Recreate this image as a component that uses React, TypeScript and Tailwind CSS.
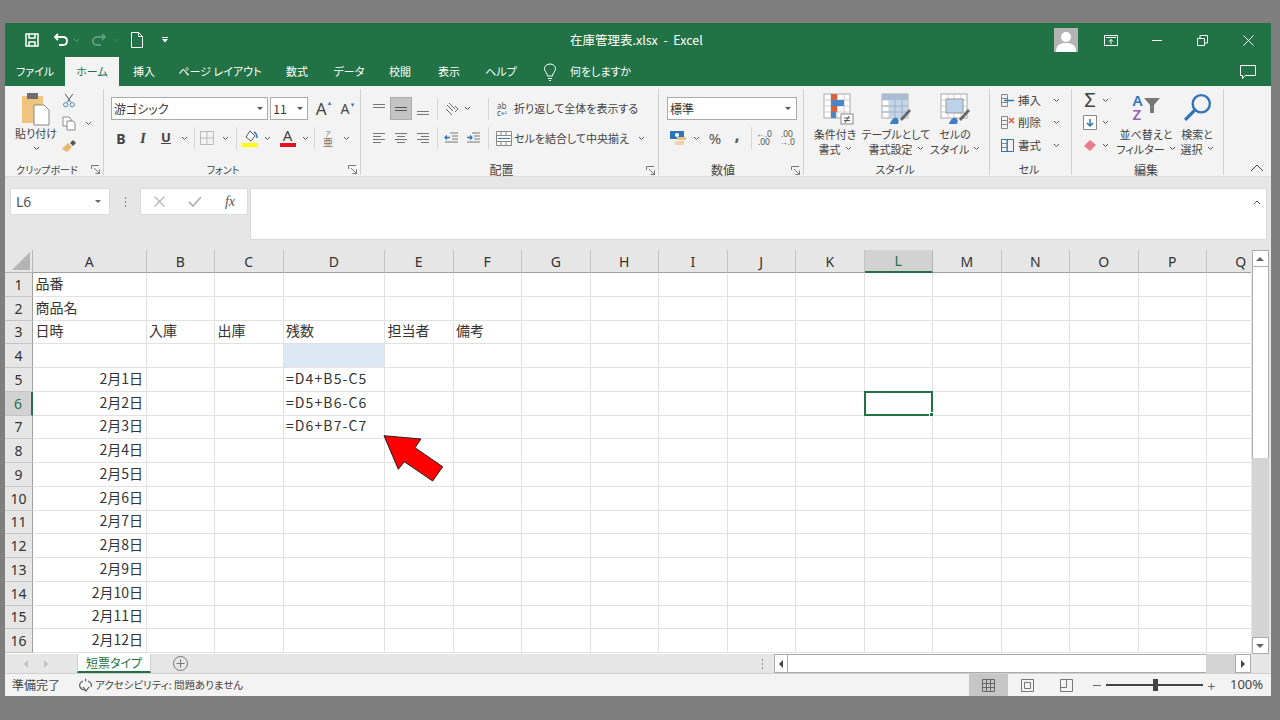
import type { ReactNode } from 'react';

// Excel window: title bar, ribbon, formula bar, sheet grid, status bar

const GREEN = '#217346';

function Chev({ className = '' }: { className?: string }) {
  return (
    <svg viewBox="0 0 7 5" className={`h-[5px] w-[7px] shrink-0 ${className}`} fill="none" stroke="#555" strokeWidth="1">
      <path d="M1 1l2.5 2.5L6 1" />
    </svg>
  );
}

function Launcher() {
  return (
    <svg viewBox="0 0 9 9" className="h-[9px] w-[9px]" fill="none" stroke="#777" strokeWidth="1">
      <path d="M.5 4V.5H8M8.5 8.5L3 3M8.5 4.5v4h-4" />
    </svg>
  );
}

function Sep({ h = 'h-[22px]' }: { h?: string }) {
  return <div className={`w-px ${h} bg-[#d6d6d6]`} />;
}

// one slot of fixed width in a ribbon row, content centred
function Slot({ w, children }: { w: string; children?: ReactNode }) {
  return <div className={`flex shrink-0 items-center justify-center ${w}`}>{children}</div>;
}

function Group({ w, label, labelW, launcher = true, children }: { w: string; label: string; labelW: string; launcher?: boolean; children: ReactNode }) {
  return (
    <div className={`mt-[3px] mb-[1px] flex shrink-0 flex-col border-r border-[#d0d0d0] ${w}`}>
      <div className="h-[75px] shrink-0">{children}</div>
      <div className="flex h-[12px] items-center text-[11px] leading-none text-[#444]">
        <div className={`shrink-0 text-center ${labelW}`}>{label}</div>
        <div className="flex-1" />
        {launcher && <div className="mr-[3px] flex"><Launcher /></div>}
      </div>
    </div>
  );
}

function AlignLines({ rows, active = false }: { rows: number[]; active?: boolean }) {
  return (
    <svg viewBox="0 0 14 14" className="h-[14px] w-[14px]" stroke={active ? '#555' : '#777'} strokeWidth="1">
      {rows.map((r, i) => (
        <path key={i} d={`M1 ${r + 0.5}h12`} />
      ))}
    </svg>
  );
}

function AlignCols({ kind }: { kind: 'l' | 'c' | 'r' }) {
  const rows = [2, 5, 8, 11];
  return (
    <svg viewBox="0 0 14 14" className="h-[14px] w-[14px]" stroke="#777" strokeWidth="1">
      {rows.map((r, i) => {
        const short = i % 2 === 1;
        const x = !short ? 1 : kind === 'l' ? 1 : kind === 'c' ? 3 : 5;
        const len = short ? 8 : 12;
        return <path key={r} d={`M${x} ${r + 0.5}h${len}`} />;
      })}
    </svg>
  );
}

function BigLabel({ w, lines }: { w: string; lines: [string, string] }) {
  return (
    <div className={`mt-[2px] text-center text-[11px] leading-[14.500px] text-[#444] ${w}`}>
      <div>{lines[0]}</div>
      <div className="flex items-center justify-center gap-[4px]">
        {lines[1]}
        <Chev />
      </div>
    </div>
  );
}

function TableIcon({ kind }: { kind: 'cond' | 'table' | 'cell' }) {
  return (
    <svg viewBox="0 0 32 32" className="h-[32px] w-[32px]" fill="none">
      <rect x="2" y="1" width="26" height="24" fill="#fff" stroke="#aaa" />
      <path d="M2 7h26M2 13h26M2 19h26M9 1v24M15 1v24M22 1v24" stroke="#ccc" />
      {kind === 'cond' && (
        <>
          <rect x="9" y="1" width="6" height="6" fill="#d9603b" />
          <rect x="9" y="7" width="13" height="6" fill="#4a86c5" />
          <rect x="9" y="13" width="6" height="6" fill="#d9603b" />
          <rect x="9" y="19" width="5" height="6" fill="#4a86c5" />
          <rect x="19" y="21" width="12" height="10" fill="#fff" stroke="#888" />
          <path d="M22 25h6M22 27.5h6M27 23l-4 7" stroke="#555" />
        </>
      )}
      {kind === 'table' && (
        <>
          <rect x="2" y="1" width="26" height="6" fill="#a9bcd4" />
          <rect x="9" y="7" width="19" height="18" fill="#c5d5e8" />
          <path d="M2 13h26M2 19h26M15 7v18M22 7v18" stroke="#9fb2c8" />
        </>
      )}
      {kind === 'cell' && <rect x="7" y="6" width="17" height="14" fill="#bcd2ea" stroke="#999" />}
      {kind !== 'cond' && (
        <>
          <path d="M20 26l9-10 2 2-9 10z" fill="#666" />
          <path d="M10 31c1-4 4-7 7-6 2 1 2 3 1 6z" fill="#3f7fc1" />
        </>
      )}
    </svg>
  );
}

function Ribbon() {
  return (
    <div className="flex h-[91px] shrink-0 border-b border-[#dcdcdc] bg-[#f3f3f3] [&>div:last-of-type]:border-r-0">
      {/* clipboard */}
      <Group w="w-[99px]" label="クリップボード" labelW="w-[81px] pl-[3px] text-[10px]">
        <div className="flex">
          <div className="ml-[10px] flex w-[42px] flex-col items-center">
            <svg viewBox="0 0 30 34" className="mt-[3px] h-[34px] w-[30px]">
              <rect x="1" y="4" width="21" height="27" fill="#efc47f" />
              <rect x="6" y="1" width="11" height="6" fill="#6e6e6e" />
              <path d="M13 13h10l5 5v15H13z" fill="#fff" stroke="#888" />
            </svg>
            <div className="text-[11px] leading-[15px] text-[#444]">貼り付け</div>
            <Chev className="mt-[5px]" />
          </div>
          <div className="ml-[4px] flex flex-col items-center gap-[8px] pt-[4px]">
            <svg viewBox="0 0 14 16" className="h-[15px] w-[14px]" fill="none" stroke="#555" strokeWidth="1">
              <path d="M3 1l6 9M11 1L5 10" />
              <circle cx="3.5" cy="12.5" r="2.3" stroke="#3f7fc1" />
              <circle cx="10.5" cy="12.5" r="2.3" stroke="#3f7fc1" />
            </svg>
            <div className="flex h-[15px] w-[14px] items-center">
              <svg viewBox="0 0 14 15" className="h-[15px] w-[14px] shrink-0" fill="#fff" stroke="#888" strokeWidth="1">
                <path d="M1 1h6l2 2v7H1z" />
                <path d="M5 5h6l2 2v7H5z" />
              </svg>
              <Chev className="ml-[9px]" />
            </div>
            <svg viewBox="0 0 16 14" className="h-[14px] w-[16px]">
              <path d="M1 10l6-6 4 4-5 5z" fill="#e9b66e" />
              <path d="M9 4l3-3 3 3-3 3z" fill="#555" />
            </svg>
          </div>
        </div>
      </Group>

      {/* font */}
      <Group w="w-[257px]" label="フォント" labelW="w-[238px] text-[10px]">
        <div className="flex h-[36px] items-center pt-[3px]">
          <div className="ml-[7px] flex h-[23px] w-[158px] items-center justify-between border border-[#ababab] bg-white px-[2px] text-[12px] text-[#333]">
            游ゴシック
            <span className="mr-[2px] h-0 w-0 border-x-[3px] border-t-[3px] border-x-transparent border-t-[#555]" />
          </div>
          <div className="ml-[2px] flex h-[23px] w-[38px] items-center justify-between border border-[#ababab] bg-white px-[2px] text-[12px] text-[#333]">
            11
            <span className="mr-[2px] h-0 w-0 border-x-[3px] border-t-[3px] border-x-transparent border-t-[#555]" />
          </div>
          <div className="ml-[4px] flex w-[24px] items-start justify-center font-['Noto_Sans'] text-[17px] leading-none text-[#444]">
            A<span className="text-[6px] text-[#3f7fc1]">▲</span>
          </div>
          <div className="flex w-[24px] items-start justify-center font-['Noto_Sans'] text-[14px] leading-none text-[#444]">
            A<span className="text-[6px] text-[#3f7fc1]">▼</span>
          </div>
        </div>
        <div className="flex h-[26px] items-center font-['Noto_Sans'] text-[#444]">
          <Slot w="w-[24px] ml-[5px]"><span className="text-[14px] font-bold">B</span></Slot>
          <Slot w="w-[20px]"><span className="font-['Liberation_Serif'] text-[15px] font-bold italic">I</span></Slot>
          <Slot w="w-[26px]"><span className="text-[13px] font-bold underline">U</span></Slot>
          <Slot w="w-[10px]"><Chev /></Slot>
          <Slot w="w-[10px]"><Sep /></Slot>
          <Slot w="w-[16px]">
            <svg viewBox="0 0 14 14" className="h-[14px] w-[14px] shrink-0" fill="none" stroke="#bbb"><path d="M.5.5h13v13H.5zM7 .5v13M.5 7h13" /></svg>
          </Slot>
          <Slot w="w-[20px]"><Chev /></Slot>
          <Slot w="w-[2px]"><Sep /></Slot>
          <Slot w="w-[26px]">
            <svg viewBox="0 0 16 17" className="h-[17px] w-[16px]">
              <path d="M8 1l5 5-4 5-5-4z" fill="#fff" stroke="#555" />
              <path d="M12 2c2 1 3 3 3 6" fill="none" stroke="#3f7fc1" strokeWidth="1.5" />
              <rect x="0" y="13" width="16" height="4" fill="#ffff00" />
            </svg>
          </Slot>
          <Slot w="w-[8px]"><Chev /></Slot>
          <Slot w="w-[29px] ml-[2px]">
            <div className="flex w-[16px] flex-col items-center text-[15px] leading-[13px]">
              <span>A</span>
              <span className="mt-[1px] h-[4px] w-[16px] bg-[#e81123]" />
            </div>
          </Slot>
          <Slot w="w-[7px]"><Chev /></Slot>
          <Slot w="w-[10px]"><Sep /></Slot>
          <Slot w="w-[18px]">
            <div className="flex flex-col items-center font-['Noto_Sans_CJK_JP'] text-[#777]">
              <span className="text-[6px] leading-[7px]">ア</span>
              <span className="text-[10px] leading-[10px]">亜</span>
            </div>
          </Slot>
          <Slot w="w-[18px]"><Chev /></Slot>
        </div>
      </Group>

      {/* alignment */}
      <Group w="w-[298px]" label="配置" labelW="w-[281px] text-[12px]">
        <div className="flex h-[36px] items-center pt-[3px]">
          <Slot w="w-[22px] ml-[7px]"><AlignLines rows={[2, 5]} /></Slot>
          <Slot w="w-[22px] h-[23px] bg-[#c4c4c4] border border-[#aaa]"><AlignLines rows={[5, 8]} active /></Slot>
          <Slot w="w-[22px]"><AlignLines rows={[9, 12]} /></Slot>
          <Slot w="w-[6px]"><Sep /></Slot>
          <Slot w="w-[22px] ml-[1px]">
            <svg viewBox="0 0 14 14" className="h-[14px] w-[14px]" fill="none" stroke="#666"><path d="M2 3l6 6M4 1l6 6M1 7l6 6M10 4l3 3-3 3" /></svg>
          </Slot>
          <Slot w="w-[8px]"><Chev /></Slot>
          <Slot w="w-[3px] ml-[16px]"><Sep /></Slot>
          <div className="ml-[7px] flex items-center text-[11px] text-[#444]">
            <span className="mr-[3px] w-[14px] font-['Noto_Sans'] text-[8px] leading-[7px] text-[#555]">ab<br />c<span className="text-[#3f7fc1]">↵</span></span>
            折り返して全体を表示する
          </div>
        </div>
        <div className="flex h-[26px] items-center">
          <Slot w="w-[22px] ml-[7px]"><AlignCols kind="l" /></Slot>
          <Slot w="w-[22px]"><AlignCols kind="c" /></Slot>
          <Slot w="w-[22px]"><AlignCols kind="r" /></Slot>
          <Slot w="w-[6px]"><Sep /></Slot>
          <Slot w="w-[22px]">
            <svg viewBox="0 0 14 14" className="h-[14px] w-[14px]" fill="none" stroke="#777"><path d="M6 2h8M8 5h6M8 8h6M1 11h13" /><path d="M1 6.500h5M3 4.500l-2 2 2 2" stroke="#2f75b5" strokeWidth="1.300" /></svg>
          </Slot>
          <Slot w="w-[22px]">
            <svg viewBox="0 0 14 14" className="h-[14px] w-[14px]" fill="none" stroke="#777"><path d="M6 2h8M8 5h6M8 8h6M1 11h13" /><path d="M1 6.500h5M4 4.500l2 2-2 2" stroke="#2f75b5" strokeWidth="1.300" /></svg>
          </Slot>
          <Slot w="w-[3px] ml-[3px]"><Sep /></Slot>
          <div className="ml-[6px] flex items-center text-[11px] text-[#444]">
            <svg viewBox="0 0 16 15" className="mr-[2px] h-[15px] w-[16px]" fill="#fff" stroke="#888"><path d="M.5.5h15v14H.5zM.5 4.500h15M.5 10.500h15M5 .5v4M10 .5v4M5 10.500v4M10 10.500v4" /><path d="M2 7.500h12" stroke="#2f75b5" /></svg>
            セルを結合して中央揃え
            <Chev className="ml-[9px]" />
          </div>
        </div>
      </Group>

      {/* number */}
      <Group w="w-[145px]" label="数値" labelW="w-[128px] text-[12px]">
        <div className="flex h-[36px] items-center pt-[3px]">
          <div className="ml-[8px] flex h-[23px] w-[130px] items-center justify-between border border-[#ababab] bg-white px-[2px] text-[12px] text-[#333]">
            標準
            <span className="mr-[3px] h-0 w-0 border-x-[3px] border-t-[3px] border-x-transparent border-t-[#555]" />
          </div>
        </div>
        <div className="flex h-[26px] items-center font-['Noto_Sans'] text-[#555]">
          <Slot w="w-[24px] ml-[7px]">
            <svg viewBox="0 0 17 16" className="h-[16px] w-[17px]">
              <rect x="0" y="1" width="14" height="8" fill="#2f75b5" />
              <circle cx="7" cy="5" r="2" fill="#fff" />
              <rect x="7" y="7" width="9" height="3" fill="#e9c27f" />
              <rect x="5" y="11" width="9" height="4" fill="#efd3a6" />
            </svg>
          </Slot>
          <Slot w="w-[12px]"><Chev /></Slot>
          <Slot w="w-[26px]"><span className="text-[15px]">%</span></Slot>
          <Slot w="w-[18px]"><span className="mt-[-8px] text-[18px] font-bold leading-none">,</span></Slot>
          <Slot w="w-[10px]"><Sep /></Slot>
          <Slot w="w-[16px]"><span className="text-center text-[8.500px] leading-[8px]"><span className="text-[#2f75b5]">←</span>.0<br />.00</span></Slot>
          <Slot w="w-[30px]"><span className="text-center text-[8.500px] leading-[8px]">.00<br /><span className="text-[#2f75b5]">→</span>.0</span></Slot>
        </div>
      </Group>

      {/* styles */}
      <Group w="w-[186px]" label="スタイル" labelW="w-[182px]" launcher={false}>
        <div className="ml-[1px] flex pt-[4px]">
          <div className="flex w-[60px] flex-col items-center pl-[5px]">
            <TableIcon kind="cond" />
            <BigLabel w="w-[60px] ml-[-5px]" lines={['条件付き', '書式']} />
          </div>
          <div className="flex w-[60px] flex-col items-center pl-[2px]">
            <TableIcon kind="table" />
            <BigLabel w="w-[76px]" lines={['テーブルとして', '書式設定']} />
          </div>
          <div className="flex w-[60px] flex-col items-center">
            <TableIcon kind="cell" />
            <BigLabel w="w-[60px]" lines={['セルの', 'スタイル']} />
          </div>
        </div>
      </Group>

      {/* cells */}
      <Group w="w-[82px]" label="セル" labelW="w-[78px]" launcher={false}>
        <div className="flex flex-col text-[11.500px] text-[#444]">
          {(['挿入', '削除', '書式'] as const).map((t, i) => (
            <div key={t} className="flex h-[22.500px] items-center pl-[10px]">
              <svg viewBox="0 0 15 15" className="mr-[3px] h-[15px] w-[15px]" fill="none" stroke="#888">
                <path d="M1.500 1.500h6v12h-6zM1.500 5.500h6M1.500 9.500h6" />
                {i === 0 && <path d="M7 7.500h7M4 7.500h4" stroke="#2f75b5" strokeWidth="1.500" />}
                {i === 1 && <path d="M9 3l5 5M14 3L9 8" stroke="#d9603b" strokeWidth="1.500" />}
                {i === 2 && <path d="M1.500 1.500h12v12h-12zM7 1.500v12" stroke="#2f75b5" />}
              </svg>
              <span className="w-[29px]">{t}</span>
              <Chev className="ml-[6px]" />
            </div>
          ))}
        </div>
      </Group>

      {/* editing */}
      <Group w="w-[152px]" label="編集" labelW="w-[148px] text-[12px]" launcher={false}>
        <div className="flex">
          <div className="flex w-[44px] flex-col pl-[11px]">
            <div className="flex h-[22.500px] items-center">
              <span className="w-[14px] text-center font-['Noto_Sans'] text-[20px] leading-none text-[#444]">Σ</span>
              <Chev className="ml-[5px]" />
            </div>
            <div className="flex h-[22.500px] items-center">
              <svg viewBox="0 0 14 15" className="h-[15px] w-[14px]" fill="#fff" stroke="#888"><path d="M.5.5h13v14H.5z" /><path d="M7 4v7M4 8l3 3 3-3" fill="none" stroke="#2f75b5" strokeWidth="1.500" /></svg>
              <Chev className="ml-[5px]" />
            </div>
            <div className="flex h-[22.500px] items-center">
              <svg viewBox="0 0 14 13" className="h-[13px] w-[14px]"><path d="M1 7l6-6 6 5-6 6z" fill="#e87d8f" /></svg>
              <Chev className="ml-[5px]" />
            </div>
          </div>
          <div className="flex w-[60px] flex-col items-center pt-[4px]">
            <div className="flex h-[32px] items-start font-['Noto_Sans']">
              <div className="flex flex-col text-[15px] font-semibold leading-[14px]">
                <span className="text-[#2f75b5]">A</span>
                <span className="text-[#9a5fb4]">Z</span>
              </div>
              <svg viewBox="0 0 16 15" className="ml-[1px] mt-[5px] h-[15px] w-[16px]"><path d="M0 0h16L10 7v8H6V7z" fill="#777" /></svg>
            </div>
            <BigLabel w="w-[64px]" lines={['並べ替えと', 'フィルター']} />
          </div>
          <div className="ml-[-1px] flex w-[44px] flex-col items-center pt-[4px]">
            <svg viewBox="0 0 27 27" className="mb-[3px] h-[29px] w-[29px]" fill="none">
              <circle cx="17" cy="10" r="8" stroke="#2f75b5" strokeWidth="2.200" />
              <path d="M11 16l-9 9" stroke="#2f75b5" strokeWidth="3" />
            </svg>
            <BigLabel w="w-[44px]" lines={['検索と', '選択']} />
          </div>
        </div>
      </Group>

      <div className="flex flex-1 flex-col justify-end pb-[4px] pl-[26px]">
        <svg viewBox="0 0 14 8" className="h-[8px] w-[14px]" fill="none" stroke="#444"><path d="M1 7l6-6 6 6" /></svg>
      </div>
    </div>
  );
}

function TitleBar() {
  return (
    <div className="flex h-[34px] shrink-0 items-center text-white" style={{ backgroundColor: GREEN }}>
      <Slot w="w-[18px] ml-[18px]">
        <svg viewBox="0 0 14 14" className="h-[14px] w-[14px]" fill="none" stroke="#fff" strokeWidth="1.500"><path d="M1 1h12v12H1z" /><path d="M4 1v4h6V1M4 13V9h6v4" /></svg>
      </Slot>
      <Slot w="w-[20px] ml-[10px]">
        <svg viewBox="0 0 16 14" className="h-[14px] w-[16px]" fill="none" stroke="#fff" strokeWidth="1.800"><path d="M5 1L2 4l3 3M2 4h8c3 0 4 2 4 4s-1 4-4 4H6" /></svg>
      </Slot>
      <Slot w="w-[7px] ml-[2px]"><Chev className="opacity-70 invert" /></Slot>
      <Slot w="w-[20px] ml-[9px]">
        <svg viewBox="0 0 16 14" className="h-[14px] w-[16px]" fill="none" stroke="#5f9c7b" strokeWidth="1.800"><path d="M11 1l3 3-3 3M14 4H6C3 4 2 6 2 8s1 4 4 4h4" /></svg>
      </Slot>
      <Slot w="w-[7px] ml-[3px]"><Chev className="opacity-30 invert" /></Slot>
      <Slot w="w-[14px] ml-[11px]">
        <svg viewBox="0 0 12 16" className="h-[16px] w-[12px]" fill="none" stroke="#fff"><path d="M.5.5h7l4 4v11H.5zM7.500.5v4h4" /></svg>
      </Slot>
      <Slot w="w-[6px] ml-[18px]">
        <svg viewBox="0 0 6 6" className="h-[6px] w-[6px]" fill="#fff"><path d="M0 0h6v1H0zM0 2h6L3 5.500z" /></svg>
      </Slot>
      <div className="ml-[402px] w-[300px] whitespace-pre text-[12.500px]">在庫管理表.xlsx  -  Excel</div>
      <div className="flex-1" />
      <div className="mr-[21px] flex h-[24px] w-[24px] items-end justify-center overflow-hidden bg-[#b4b4b4]">
        <svg viewBox="0 0 24 24" className="h-[24px] w-[24px]" fill="#fff"><circle cx="12" cy="9" r="5" /><path d="M2 24c0-7 4-9 10-9s10 2 10 9z" /></svg>
      </div>
      <Slot w="w-[24px] mr-[22px]">
        <svg viewBox="0 0 14 11" className="h-[11px] w-[14px]" fill="none" stroke="#fff"><path d="M.5.5h13v10H.5zM2 2.500h10M7 9V4.500M5 6.500l2-2 2 2" /></svg>
      </Slot>
      <Slot w="w-[24px] mr-[21px]">
        <span className="h-px w-[10px] bg-white" />
      </Slot>
      <Slot w="w-[24px] mr-[22px]">
        <svg viewBox="0 0 11 11" className="h-[11px] w-[11px]" fill="none" stroke="#fff"><path d="M.5 3.500h7v7h-7zM3 3V.5h7.500V8H8" /></svg>
      </Slot>
      <Slot w="w-[24px] mr-[11px]">
        <svg viewBox="0 0 11 11" className="h-[11px] w-[11px]" fill="none" stroke="#fff"><path d="M.5.5l10 10M10.500.5l-10 10" /></svg>
      </Slot>
    </div>
  );
}

function TabRow() {
  const tabs: [string, string][] = [
    ['挿入', 'w-[50px]'],
    ['ページ レイアウト', 'w-[102px]'],
    ['数式', 'w-[52px]'],
    ['データ', 'w-[52px]'],
    ['校閲', 'w-[50px]'],
    ['表示', 'w-[48px]'],
    ['ヘルプ', 'w-[56px]'],
  ];
  return (
    <div className="flex h-[29px] shrink-0 items-stretch text-[11px] text-white" style={{ backgroundColor: GREEN }}>
      <div className="flex w-[60px] items-center justify-center">ファイル</div>
      <div className="flex w-[54px] items-center justify-center bg-[#f3f3f3] text-[#217346]">ホーム</div>
      {tabs.map(([t, w]) => (
        <div key={t} className={`flex items-center justify-center ${w}`}>{t}</div>
      ))}
      <div className="ml-[14px] flex items-center">
        <svg viewBox="0 0 14 18" className="mr-[13px] h-[18px] w-[14px]" fill="none" stroke="#fff"><path d="M4.500 13c0-3-3-4-3-7.500C1.500 3 4 1 7 1s5.500 2 5.500 4.500C12.500 9 9.500 10 9.500 13zM5 15.500h4M6 17.500h2" /></svg>
        何をしますか
      </div>
      <div className="flex-1" />
      <div className="mr-[15px] flex items-center">
        <svg viewBox="0 0 16 14" className="h-[14px] w-[16px]" fill="none" stroke="#fff"><path d="M.5.5h15v10H5l-2.500 3v-3h-2z" /></svg>
      </div>
    </div>
  );
}

function FormulaBar() {
  return (
    <div className="flex h-[73px] shrink-0 bg-[#e6e6e6] pt-[11px] font-['Noto_Sans']">
      <div className="ml-[5px] flex h-[27px] w-[100px] items-center justify-between border border-[#dadada] bg-white px-[5px] text-[14px] text-[#555]">
        L6
        <span className="mr-[3px] h-0 w-0 border-x-[3px] border-t-[3px] border-x-transparent border-t-[#666]" />
      </div>
      <div className="flex h-[27px] w-[30px] flex-col items-center justify-center gap-[2px]">
        <span className="h-[2px] w-px bg-[#888]" />
        <span className="h-[2px] w-px bg-[#888]" />
        <span className="h-[2px] w-px bg-[#888]" />
      </div>
      <div className="flex h-[27px] w-[108px] items-center border border-[#dadada] bg-white">
        <Slot w="w-[36px]">
          <svg viewBox="0 0 11 11" className="h-[11px] w-[11px]" fill="none" stroke="#b5b5b5" strokeWidth="1.300"><path d="M.5.5l10 10M10.500.5l-10 10" /></svg>
        </Slot>
        <Slot w="w-[36px]">
          <svg viewBox="0 0 14 11" className="h-[11px] w-[14px]" fill="none" stroke="#b5b5b5" strokeWidth="1.800"><path d="M1 6l4 4 8-9" /></svg>
        </Slot>
        <Slot w="w-[34px]"><span className="font-['Liberation_Serif'] text-[14px] italic text-[#555]">fx</span></Slot>
      </div>
      <div className="ml-[2px] flex h-[52px] flex-1 items-start justify-end border border-[#dadada] bg-white pr-[5px] pt-[11px]">
        <svg viewBox="0 0 8 5" className="h-[5px] w-[8px]" fill="none" stroke="#555"><path d="M1 4l3-3 3 3" /></svg>
      </div>
      <div className="w-[4px]" />
    </div>
  );
}

const COLS = ['A', 'B', 'C', 'D', 'E', 'F', 'G', 'H', 'I', 'J', 'K', 'L', 'M', 'N', 'O', 'P', 'Q'];

// row number -> text per column
const CELLS: Record<number, Record<string, string>> = {
  1: { A: '品番' },
  2: { A: '商品名' },
  3: { A: '日時', B: '入庫', C: '出庫', D: '残数', E: '担当者', F: '備考' },
  5: { A: '2月1日', D: '=D4+B5-C5' },
  6: { A: '2月2日', D: '=D5+B6-C6' },
  7: { A: '2月3日', D: '=D6+B7-C7' },
  8: { A: '2月4日' },
  9: { A: '2月5日' },
  10: { A: '2月6日' },
  11: { A: '2月7日' },
  12: { A: '2月8日' },
  13: { A: '2月9日' },
  14: { A: '2月10日' },
  15: { A: '2月11日' },
  16: { A: '2月12日' },
};

function Sheet() {
  const rows = Array.from({ length: 16 }, (_, i) => i + 1);
  return (
    <div className="relative flex h-[404px] shrink-0 bg-white">
      <div className="grid w-[1246px] shrink-0 grid-cols-[28px_113.5px_68.5px_68.5px_101.5px_repeat(13,68.5px)] grid-rows-[23px_repeat(16,23.75px)] overflow-hidden text-[14px] text-[#333]">
        <div className="flex items-end justify-end border-r border-b border-[#b5b5b5] bg-[#e6e6e6] p-[2px]">
          <span className="h-0 w-0 border-b-[18px] border-l-[18px] border-b-[#b4b4b4] border-l-transparent" />
        </div>
        {COLS.map((c) => (
          <div
            key={c}
            className={`flex items-center justify-center border-r border-b font-['Noto_Sans'] text-[14px] ${
              c === 'L'
                ? 'border-r-[#b5b5b5] border-b-2 border-b-[#217346] bg-[#d2d2d2] text-[#217346]'
                : 'border-r-[#c4c4c4] border-b-[#9f9f9f] bg-[#e6e6e6] text-[#333]'
            }`}
          >
            {c}
          </div>
        ))}
        {rows.map((r) => (
          <RowCells key={r} r={r} />
        ))}
      </div>
      {/* red call-out arrow */}
      <svg viewBox="0 0 70 60" className="absolute left-[375px] top-[180px] h-[60px] w-[70px]">
        <path d="M4 5.700L41 9l-6 8.700L62.700 36.700 52.700 51 24.300 31.700l-6 7.600z" fill="#ff0000" stroke="#222" strokeWidth="1" />
      </svg>
      <ScrollV />
    </div>
  );
}

function RowCells({ r }: { r: number }) {
  const sel = r === 6;
  return (
    <>
      <div
        className={`flex items-center justify-center border-b font-['Noto_Sans'] text-[14px] ${
          sel
            ? 'border-r-2 border-r-[#217346] border-b-[#c4c4c4] bg-[#d2d2d2] text-[#217346]'
            : 'border-r border-r-[#9f9f9f] border-b-[#c4c4c4] bg-[#e6e6e6] text-[#333]'
        }`}
      >
        {r}
      </div>
      {COLS.map((c) => {
        const text = CELLS[r]?.[c];
        const isDate = c === 'A' && r >= 5;
        const fill = c === 'D' && r === 4;
        const formula = c === 'D' && r >= 5;
        return (
          <div
            key={c}
            className={`relative flex items-center overflow-visible whitespace-nowrap border-r border-b border-[#e1e1e1] px-[2.500px] pb-[2px] ${isDate ? 'justify-end' : ''} ${fill ? 'bg-[#dce9f5]' : ''} ${formula ? 'tracking-[1.100px]' : ''}`}
          >
            {text}
            {c === 'L' && r === 6 && (
              <span className="absolute inset-[-1px] z-10 border-2 border-[#217346]">
                <span className="absolute bottom-[-3px] right-[-3px] h-[5px] w-[5px] border border-white bg-[#217346]" />
              </span>
            )}
          </div>
        );
      })}
    </>
  );
}

function ScrollV() {
  return (
    <div className="flex flex-1 flex-col items-center bg-[#e6e6e6] pr-[2px]">
      <div className="flex h-[17px] w-[17px] shrink-0 items-center justify-center border border-[#ababab] bg-white">
        <span className="h-0 w-0 border-x-[4px] border-b-[4px] border-x-transparent border-b-[#666]" />
      </div>
      <div className="h-[191px] w-[17px] shrink-0 border-x border-[#ababab] bg-white" />
      <div className="w-[17px] flex-1 bg-[#d4d4d4]" />
      <div className="flex h-[17px] w-[17px] shrink-0 items-center justify-center border border-[#ababab] bg-white">
        <span className="h-0 w-0 border-x-[4px] border-t-[4px] border-x-transparent border-t-[#666]" />
      </div>
    </div>
  );
}

function SheetTabs() {
  return (
    <div className="flex h-[20px] shrink-0 items-stretch border-b border-[#d0d0d0] bg-[#e6e6e6]">
      <div className="flex w-[72px] items-center pl-[19px] text-[#bbb]">
        <span className="h-0 w-0 border-y-[4px] border-r-[4px] border-y-transparent border-r-[#c2c2c2]" />
        <span className="ml-[16px] h-0 w-0 border-y-[4px] border-l-[4px] border-y-transparent border-l-[#c2c2c2]" />
      </div>
      <div className="flex w-[74px] items-center justify-center border-x border-b-2 border-x-[#cfcfcf] border-b-[#217346] bg-white text-[12px] text-[#217346]">
        短票タイプ
      </div>
      <div className="ml-[22px] flex items-center">
        <svg viewBox="0 0 15 15" className="h-[15px] w-[15px]" fill="none" stroke="#777"><circle cx="7.500" cy="7.500" r="7" /><path d="M7.500 3.500v8M3.500 7.500h8" /></svg>
      </div>
      <div className="flex-1" />
      <div className="mr-[11px] flex flex-col items-center justify-center gap-[2px]">
        <span className="h-[2px] w-px bg-[#888]" />
        <span className="h-[2px] w-px bg-[#888]" />
        <span className="h-[2px] w-px bg-[#888]" />
      </div>
      <div className="flex w-[14px] items-center justify-center border border-[#ababab] bg-white">
        <span className="h-0 w-0 border-y-[4px] border-r-[4px] border-y-transparent border-r-[#444]" />
      </div>
      <div className="w-[418px] border-y border-[#ababab] bg-white" />
      <div className="w-[29px] bg-[#d4d4d4]" />
      <div className="flex w-[16px] items-center justify-center border border-[#ababab] bg-white">
        <span className="h-0 w-0 border-y-[4px] border-l-[4px] border-y-transparent border-l-[#444]" />
      </div>
      <div className="w-[20px]" />
    </div>
  );
}

function StatusBar() {
  return (
    <div className="flex h-[22px] shrink-0 items-center bg-[#f3f3f3] text-[12px] text-[#444]">
      <span className="ml-[7px]">準備完了</span>
      <svg viewBox="0 0 15 15" className="ml-[18px] mr-[2px] h-[15px] w-[15px]" fill="none" stroke="#555" strokeWidth="1.200">
        <path d="M5 3C2 4 1 7 2 9s3 3 5 3M10 3c3 1 4 4 3 6M5 9l3 4 3-4M7 1c1 0 1 2 0 2" />
      </svg>
      <span className="text-[10.500px]">アクセシビリティ: 問題ありません</span>
      <div className="flex-1" />
      <div className="flex h-full w-[39px] items-center justify-center bg-[#c6c6c6]">
        <svg viewBox="0 0 13 13" className="h-[13px] w-[13px]" fill="none" stroke="#666"><path d="M.5.5h12v12H.5zM4.500.5v12M8.500.5v12M.5 4.500h12M.5 8.500h12" /></svg>
      </div>
      <Slot w="w-[39px]">
        <svg viewBox="0 0 13 13" className="h-[13px] w-[13px]" fill="none" stroke="#777"><path d="M.5.5h12v12H.5zM3.500 3.500h6v6h-6z" /></svg>
      </Slot>
      <Slot w="w-[40px]">
        <svg viewBox="0 0 13 13" className="h-[13px] w-[13px]" fill="none" stroke="#777"><path d="M.5.5h12v12H.5zM.5 8.500h6V.5" /></svg>
      </Slot>
      <span className="ml-[6px] h-px w-[8px] bg-[#666]" />
      <div className="relative ml-[5px] flex h-[12px] w-[97px] items-center">
        <span className="h-[2px] w-full bg-[#444]" />
        <span className="absolute left-[47px] top-0 h-[12px] w-[5px] bg-[#444]" />
      </div>
      <span className="ml-[5px] text-[13px] leading-none text-[#666]">+</span>
      <span className="ml-[15px] mr-[8px] w-[33px] text-right font-['Noto_Sans'] text-[13px]">100%</span>
    </div>
  );
}

export default function App() {
  return (
    <div className="h-[720px] w-[1280px] overflow-hidden bg-[#7f7f7f] pl-[5px] pt-[23px] font-['Noto_Sans_CJK_JP','Liberation_Sans',sans-serif] [font-feature-settings:'palt']">
      <div className="flex h-[673px] w-[1266px] flex-col">
        <TitleBar />
        <TabRow />
        <Ribbon />
        <FormulaBar />
        <Sheet />
        <SheetTabs />
        <StatusBar />
      </div>
    </div>
  );
}
